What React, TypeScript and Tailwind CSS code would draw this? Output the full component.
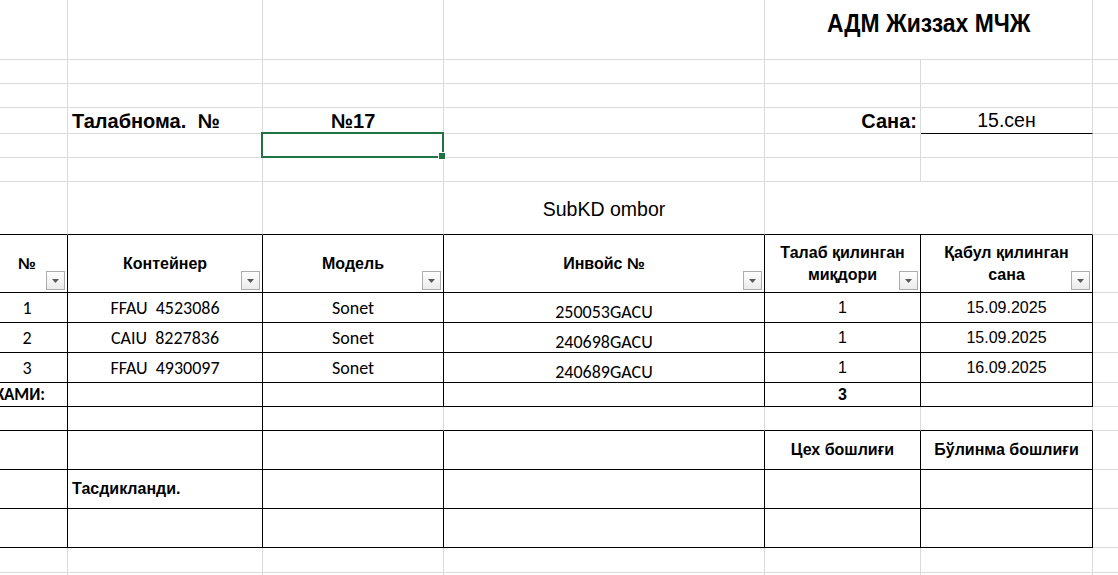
import React from 'react';

// column widths: A is partly scrolled off to the left
const A = 'w-[81px] -ml-[13px]';
const B = 'w-[195px]';
const C = 'w-[181px]';
const D = 'w-[321px]';
const E = 'w-[156px]';
const F = 'w-[172px]';
const EF = 'w-[328px]';
const GG = 'w-[120px]';

const arial = "font-['Liberation_Sans',Arial,sans-serif]";
const calibri = "font-['Carlito','Lato',sans-serif]";

type CellProps = {
  w: string;
  r?: boolean; // black right border
  b?: boolean; // black bottom border
  className?: string;
  children?: React.ReactNode;
};

const Cell: React.FC<CellProps> = ({ w, r, b, className = '', children }) => (
  <div
    className={`${w} shrink-0 h-full relative flex border-r border-b ${r ? 'border-r-black' : 'border-r-[#dadada]'} ${
      b ? 'border-b-black' : 'border-b-[#dadada]'
    } ${className}`}
  >
    {children}
  </div>
);

const Row: React.FC<{ h: string; children: React.ReactNode }> = ({ h, children }) => (
  <div className={`${h} flex shrink-0`}>{children}</div>
);

const Filter = () => (
  <div className="absolute right-[2px] bottom-[2px] w-[19px] h-[19px] border border-[#acacac] bg-gradient-to-b from-white to-[#ebebeb] flex items-center justify-center">
    <svg width="7" height="4" viewBox="0 0 7 4">
      <path d="M0 0h7L3.5 4z" fill="#595959" />
    </svg>
  </div>
);

const Head: React.FC<{ w: string; children: React.ReactNode }> = ({ w, children }) => (
  <Cell w={w} r b className={`items-center justify-center text-center ${arial} font-bold text-[16px] leading-[22px] text-black`}>
    <span className="pt-[1px]">{children}</span>
    <Filter />
  </Cell>
);

const rows = [
  { n: '1', box: 'FFAU  4523086', model: 'Sonet', inv: '250053GACU', qty: '1', date: '15.09.2025' },
  { n: '2', box: 'CAIU  8227836', model: 'Sonet', inv: '240698GACU', qty: '1', date: '15.09.2025' },
  { n: '3', box: 'FFAU  4930097', model: 'Sonet', inv: '240689GACU', qty: '1', date: '16.09.2025' },
];

export default function App() {
  return (
    <div className={`w-[1118px] h-[575px] overflow-hidden bg-white text-black ${arial}`}>
      {/* 1: company title */}
      <Row h="h-[60px]">
        <Cell w={A} />
        <Cell w={B} />
        <Cell w={C} />
        <Cell w={D} />
        <Cell w={EF} className="justify-center pt-[8px]">
          <span className="inline-block scale-x-[0.88] font-bold text-[26px] leading-[30px] whitespace-nowrap">АДМ Жиззах МЧЖ</span>
        </Cell>
        <Cell w={GG} />
      </Row>

      {[0, 1].map((i) => (
        <Row key={i} h="h-[24px]">
          <Cell w={A} />
          <Cell w={B} />
          <Cell w={C} />
          <Cell w={D} />
          <Cell w={E} />
          <Cell w={F} />
          <Cell w={GG} />
        </Row>
      ))}

      {/* 4: request number + date */}
      <Row h="h-[26px]">
        <Cell w={A} />
        <Cell w={B} className="items-center pl-[4px]">
          <span className="font-bold text-[20px] whitespace-pre">Талабнома.  №</span>
        </Cell>
        <Cell w={C} className="items-center justify-center">
          <span className="font-bold text-[20px]">№17</span>
        </Cell>
        <Cell w={D} />
        <Cell w={E} className="items-center justify-end pr-[3px]">
          <span className="font-bold text-[20px]">Сана:</span>
        </Cell>
        <Cell w={F} b className="items-center justify-center">
          <span className="text-[19.5px]">15.сен</span>
        </Cell>
        <Cell w={GG} />
      </Row>

      {/* 5: selected cell */}
      <Row h="h-[24px]">
        <Cell w={A} />
        <Cell w={B} />
        <Cell w={C}>
          <div className="absolute -left-[2px] -top-[2px] -right-px -bottom-px border-2 border-[#217346] z-10">
            <div className="absolute -right-[4px] -bottom-[4px] w-[8px] h-[8px] bg-[#217346] border border-white" />
          </div>
        </Cell>
        <Cell w={D} />
        <Cell w={E} />
        <Cell w={F} />
        <Cell w={GG} />
      </Row>

      <Row h="h-[24px]">
        <Cell w={A} />
        <Cell w={B} />
        <Cell w={C} />
        <Cell w={D} />
        <Cell w={E} />
        <Cell w={F} />
        <Cell w={GG} />
      </Row>

      {/* 7: warehouse */}
      <Row h="h-[53px]">
        <Cell w={A} b />
        <Cell w={B} b />
        <Cell w={C} b />
        <Cell w={D} b className="items-center justify-center pt-[3px]">
          <span className="text-[19.5px]">SubKD ombor</span>
        </Cell>
        <Cell w={EF} b />
        <Cell w={GG} />
      </Row>

      {/* 8: table header */}
      <Row h="h-[58px]">
        <Head w={A}>№</Head>
        <Head w={B}>Контейнер</Head>
        <Head w={C}>Модель</Head>
        <Head w={D}>Инвойс №</Head>
        <Head w={E}>
          Талаб қилинган
          <br />
          миқдори
        </Head>
        <Head w={F}>
          Қабул қилинган
          <br />
          сана
        </Head>
        <Cell w={GG} />
      </Row>

      {rows.map((r) => (
        <Row key={r.n} h="h-[30px]">
          <Cell w={A} r b className={`items-center justify-center pt-[2px] ${calibri} text-[18px]`}>
            {r.n}
          </Cell>
          <Cell w={B} r b className={`items-center justify-center pt-[2px] ${calibri} text-[18px] whitespace-pre`}>
            {r.box}
          </Cell>
          <Cell w={C} r b className={`items-center justify-center pt-[2px] ${calibri} text-[18px]`}>
            {r.model}
          </Cell>
          <Cell w={D} r b className={`items-end justify-center pb-[1px] ${calibri} text-[18px] leading-[18px]`}>
            {r.inv}
          </Cell>
          <Cell w={E} r b className="items-center justify-center text-[16px]">
            {r.qty}
          </Cell>
          <Cell w={F} r b className="items-center justify-center text-[16px]">
            {r.date}
          </Cell>
          <Cell w={GG} />
        </Row>
      ))}

      {/* 12: total */}
      <Row h="h-[24px]">
        <Cell w={A} r b className={`items-center justify-end pr-[22px] ${calibri} font-bold text-[17px] whitespace-nowrap`}>
          ЖАМИ:
        </Cell>
        <Cell w={B} r b />
        <Cell w={C} r b />
        <Cell w={D} r b />
        <Cell w={E} r b className="items-center justify-center font-bold text-[16px]">
          3
        </Cell>
        <Cell w={F} r b />
        <Cell w={GG} />
      </Row>

      <Row h="h-[24px]">
        <Cell w={A} r b />
        <Cell w={B} r b />
        <Cell w={C} b />
        <Cell w={D} b />
        <Cell w={E} b />
        <Cell w={F} b />
        <Cell w={GG} />
      </Row>

      {/* 14-16: signatures */}
      <Row h="h-[39px]">
        <Cell w={A} r b />
        <Cell w={B} r b />
        <Cell w={C} r b />
        <Cell w={D} r b />
        <Cell w={E} r b className="items-center justify-center font-bold text-[16px]">
          Цех бошлиғи
        </Cell>
        <Cell w={F} r b className="items-center justify-center font-bold text-[16px]">
          Бўлинма бошлиғи
        </Cell>
        <Cell w={GG} />
      </Row>
      <Row h="h-[39px]">
        <Cell w={A} r b />
        <Cell w={B} r b className="items-center pl-[4px] font-bold text-[16px]">
          Тасдикланди.
        </Cell>
        <Cell w={C} r b />
        <Cell w={D} r b />
        <Cell w={E} r b />
        <Cell w={F} r b />
        <Cell w={GG} />
      </Row>
      <Row h="h-[39px]">
        <Cell w={A} r b />
        <Cell w={B} r b />
        <Cell w={C} r b />
        <Cell w={D} r b />
        <Cell w={E} r b />
        <Cell w={F} r b />
        <Cell w={GG} />
      </Row>

      {[0, 1].map((i) => (
        <Row key={i} h="h-[25px]">
          <Cell w={A} />
          <Cell w={B} />
          <Cell w={C} />
          <Cell w={D} />
          <Cell w={E} />
          <Cell w={F} />
          <Cell w={GG} />
        </Row>
      ))}
    </div>
  );
}
